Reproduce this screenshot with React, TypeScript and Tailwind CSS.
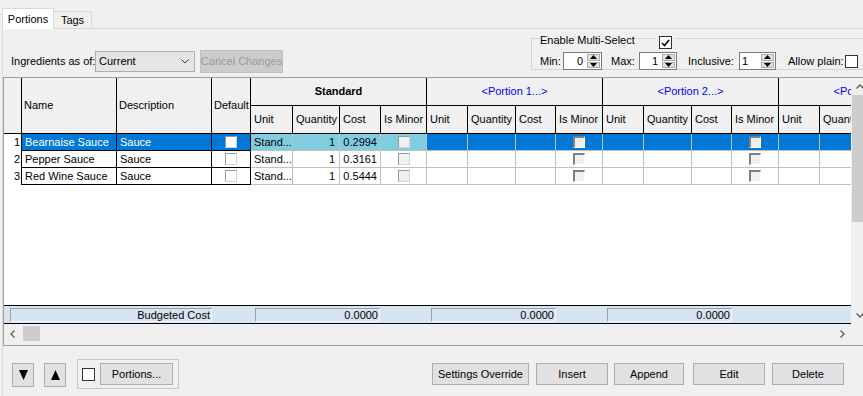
import React from 'react';

const FONT = "font-['Liberation_Sans',Arial,sans-serif]";

type Row = { n: number; name: string; desc: string; unit: string; qty: string; cost: string; selected?: boolean };

const ROWS: Row[] = [
  { n: 1, name: 'Bearnaise Sauce', desc: 'Sauce', unit: 'Stand...', qty: '1', cost: '0.2994', selected: true },
  { n: 2, name: 'Pepper Sauce', desc: 'Sauce', unit: 'Stand...', qty: '1', cost: '0.3161' },
  { n: 3, name: 'Red Wine Sauce', desc: 'Sauce', unit: 'Stand...', qty: '1', cost: '0.5444' },
];

const STD = [
  { label: 'Unit', w: 'w-[42px]' },
  { label: 'Quantity', w: 'w-[47px]' },
  { label: 'Cost', w: 'w-[41px]' },
  { label: 'Is Minor', w: 'w-[46px]' },
];

const POR = [
  { label: 'Unit', w: 'w-[41px]' },
  { label: 'Quantity', w: 'w-[48px]' },
  { label: 'Cost', w: 'w-[40px]' },
  { label: 'Is Minor', w: 'w-[47px]' },
];

const PORTIONS = ['<Portion 1...>', '<Portion 2...>', '<Portion 3...>'];

function Chevron({ dir }: { dir: 'up' | 'down' | 'left' | 'right' }) {
  if (dir === 'up' || dir === 'down') {
    const pts = dir === 'up' ? '0.5,4.5 4,1 7.5,4.5' : '0.5,0.5 4,4 7.5,0.5';
    return (
      <svg width="8" height="5" viewBox="0 0 8 5">
        <polyline points={pts} fill="none" stroke="#606060" strokeWidth="1.4" />
      </svg>
    );
  }
  const pts = dir === 'left' ? '4.5,0.5 1,4 4.5,7.5' : '0.5,0.5 4,4 0.5,7.5';
  return (
    <svg width="5" height="8" viewBox="0 0 5 8">
      <polyline points={pts} fill="none" stroke="#606060" strokeWidth="1.4" />
    </svg>
  );
}

function Tri({ up, w = 7, h = 4 }: { up?: boolean; w?: number; h?: number }) {
  const pts = up ? `0,${h} ${w / 2},0 ${w},${h}` : `0,0 ${w / 2},${h} ${w},0`;
  return (
    <svg width={w} height={h} viewBox={`0 0 ${w} ${h}`}>
      <polygon points={pts} fill="#000" />
    </svg>
  );
}

function Spin({ value, w, left }: { value: string; w: string; left?: boolean }) {
  return (
    <div className={`${w} h-[18px] border border-[#7a7a7a] bg-white flex shrink-0`}>
      <div className={`flex-1 leading-[16px] ${left ? 'text-left pl-[2px]' : 'text-right pr-[3px]'}`}>{value}</div>
      <div className="w-[15px] flex flex-col gap-px p-px">
        <div className="flex-1 bg-[#e1e1e1] border border-[#adadad] flex items-center justify-center">
          <Tri up w={7} h={4} />
        </div>
        <div className="flex-1 bg-[#e1e1e1] border border-[#adadad] flex items-center justify-center">
          <Tri w={7} h={4} />
        </div>
      </div>
    </div>
  );
}

function CheckMark() {
  return (
    <svg width="9" height="8" viewBox="0 0 9 8">
      <polyline points="1,4 3.5,6.5 8,1" fill="none" stroke="#000" strokeWidth="1.6" />
    </svg>
  );
}

function FlatBox({ gray }: { gray?: boolean }) {
  return (
    <div
      className={`w-[12px] h-[12px] border border-t-[#9a9a9a] border-l-[#9a9a9a] border-r-[#d4d4d4] border-b-[#d4d4d4] ${
        gray ? 'bg-[#f0f0f0]' : 'bg-white'
      }`}
    />
  );
}

function SunkBox() {
  return (
    <div className="w-[12px] h-[12px] border-t-2 border-l-2 border-t-[#808080] border-l-[#808080] border-r border-b border-r-white border-b-white bg-[#f0f0f0]" />
  );
}

function GroupHeader({ title, blue, subs }: { title: string; blue?: boolean; subs: typeof STD }) {
  return (
    <div className="flex flex-col w-[176px] shrink-0">
      <div
        className={`h-[28px] border-b border-r border-black flex items-center justify-center whitespace-nowrap overflow-hidden ${
          blue ? 'text-[#0000ff]' : 'font-bold'
        }`}
      >
        {title}
      </div>
      <div className="flex h-[28px] border-b border-black">
        {subs.map((s, i) => (
          <div key={i} className={`${s.w} shrink-0 border-r border-black pl-[3px] flex items-center whitespace-nowrap overflow-hidden`}>
            {s.label}
          </div>
        ))}
      </div>
    </div>
  );
}

function DataRow({ r }: { r: Row }) {
  const sel = r.selected;
  const left = sel ? 'bg-[#0078d7] text-white' : 'bg-white';
  const std = sel ? 'bg-[#80cde1]' : 'bg-white';
  const por = sel ? 'bg-[#0078d7]' : 'bg-white';
  const cell = 'h-[17px] border-r border-b border-[#c0c0c0] shrink-0 leading-[16px] whitespace-nowrap overflow-hidden';
  return (
    <div className="flex h-[17px] shrink-0">
      <div className="w-[18px] shrink-0 bg-white border-r border-black text-right pr-px leading-[16px]">{r.n}</div>
      <div className={`w-[95px] shrink-0 border-r border-b border-black pl-[3px] leading-[16px] ${left}`}>{r.name}</div>
      <div className={`w-[95px] shrink-0 border-r border-b border-black pl-[3px] leading-[16px] ${left}`}>{r.desc}</div>
      <div className={`w-[39px] shrink-0 border-r border-b border-black flex items-center justify-center ${left}`}>
        <FlatBox />
      </div>
      <div className={`${cell} w-[42px] pl-[3px] ${std}`}>{r.unit}</div>
      <div className={`${cell} w-[47px] text-right pr-[4px] ${std}`}>{r.qty}</div>
      <div className={`${cell} w-[41px] text-right pr-[3px] ${std}`}>{r.cost}</div>
      <div className={`${cell} w-[46px] flex items-center justify-center ${std}`}>
        <FlatBox gray />
      </div>
      {PORTIONS.map((p) => (
        <div key={p} className="flex shrink-0">
          <div className={`${cell} w-[41px] ${por}`} />
          <div className={`${cell} w-[48px] ${por}`} />
          <div className={`${cell} w-[40px] ${por}`} />
          <div className={`${cell} w-[47px] flex items-center justify-center ${por}`}>
            <SunkBox />
          </div>
        </div>
      ))}
    </div>
  );
}

function Field({ className, children }: { className: string; children: React.ReactNode }) {
  return (
    <div
      className={`${className} shrink-0 h-[14px] border border-t-[#a0a0a0] border-l-[#a0a0a0] border-r-[#f4f7fb] border-b-[#f4f7fb] text-right pr-px leading-[12px]`}
    >
      {children}
    </div>
  );
}

function Btn({ className, children }: { className: string; children: React.ReactNode }) {
  return (
    <div className={`${className} shrink-0 h-[22px] bg-[#e1e1e1] border border-[#adadad] flex items-center justify-center whitespace-nowrap`}>
      {children}
    </div>
  );
}

export default function App() {
  return (
    <div className={`${FONT} text-[11px] text-black w-[863px] h-[396px] overflow-hidden bg-[#f0f0f0] flex flex-col`}>
      {/* tab strip */}
      <div className="h-[29px] flex items-end pl-[2px] shrink-0">
        <div className="w-[52px] h-[21px] bg-white border border-b-0 border-[#d9d9d9] flex items-center justify-center">Portions</div>
        <div className="w-[38px] h-[18px] border-t border-r border-[#d9d9d9] flex items-center justify-center border-b border-b-[#d9d9d9]">Tags</div>
        <div className="flex-1 border-b border-[#d9d9d9]" />
      </div>

      {/* tab page */}
      <div className="ml-[2px] border-l border-[#d9d9d9] flex-1 flex flex-col w-[900px]">
        {/* toolbar */}
        <div className="h-[48px] flex items-start shrink-0">
          <div className="mt-[21px] h-[23px] flex items-center">
            <div className="ml-[8px] w-[84px] whitespace-nowrap">Ingredients as of:</div>
            <div className="w-[100px] h-[21px] bg-[#e5e5e5] border border-[#acacac] flex items-center pl-[3px] pr-[5px]">
              <span className="flex-1">Current</span>
              <svg width="8" height="5" viewBox="0 0 8 5">
                <polyline points="0.5,0.5 4,4 7.5,0.5" fill="none" stroke="#404040" strokeWidth="1" />
              </svg>
            </div>
            <div className="ml-[5px] w-[83px] h-[23px] bg-[#cccccc] border border-[#bfbfbf] text-[#9a9a9a] flex items-center justify-center whitespace-nowrap">
              Cancel Changes
            </div>
          </div>

          <div className="ml-[248px] mt-[9px] w-[400px] h-[32px] border border-[#d5d5d5] relative shrink-0 flex items-start pt-[13px]">
            <div className="absolute left-[7px] top-[-5px] bg-[#f0f0f0] px-px leading-[13px]">Enable Multi-Select</div>
            <div className="absolute left-[124px] top-[-3px] px-[3px] bg-[#f0f0f0]">
              <div className="w-[13px] h-[13px] bg-white border border-[#333] flex items-center justify-center">
                <CheckMark />
              </div>
            </div>
            <div className="ml-[8px] w-[23px] leading-[18px]">Min:</div>
            <Spin value="0" w="w-[39px]" />
            <div className="ml-[9px] w-[28px] leading-[18px]">Max:</div>
            <Spin value="1" w="w-[38px]" />
            <div className="ml-[11px] w-[51px] leading-[18px]">Inclusive:</div>
            <Spin value="1" w="w-[37px]" left />
            <div className="ml-[12px] w-[57px] leading-[18px] whitespace-nowrap">Allow plain:</div>
            <div className="mt-[3px] w-[13px] h-[13px] bg-white border border-[#333]" />
          </div>
        </div>

        {/* grid */}
        <div className="w-[866px] shrink-0 border border-[#a0a0a0] flex flex-col">
          <div className="flex h-[246px]">
            <div className="w-[847px] flex flex-col overflow-hidden shrink-0 bg-white">
              {/* header */}
              <div className="flex h-[56px] shrink-0 bg-[#f0f0f0]">
                <div className="w-[18px] shrink-0 border-r border-b border-black" />
                <div className="w-[95px] shrink-0 border-r border-b border-black pl-[2px] flex items-center">Name</div>
                <div className="w-[95px] shrink-0 border-r border-b border-black pl-[2px] flex items-center">Description</div>
                <div className="w-[39px] shrink-0 border-r border-b border-black pl-[2px] flex items-center">Default</div>
                <GroupHeader title="Standard" subs={STD} />
                {PORTIONS.map((p) => (
                  <GroupHeader key={p} title={p} blue subs={POR} />
                ))}
              </div>
              {ROWS.map((r) => (
                <DataRow key={r.n} r={r} />
              ))}
              <div className="flex-1 bg-white" />
              <div className="h-[19px] shrink-0 border-y border-black bg-[#d7e4f2] flex items-center">
                <Field className="ml-[6px] w-[202px]">Budgeted Cost</Field>
                <Field className="ml-[43px] w-[125px]">0.0000</Field>
                <Field className="ml-[51px] w-[125px]">0.0000</Field>
                <Field className="ml-[51px] w-[125px]">0.0000</Field>
              </div>
            </div>
            {/* vertical scrollbar */}
            <div className="w-[17px] shrink-0 bg-[#f0f0f0] flex flex-col">
              <div className="h-[17px] flex items-center justify-center">
                <Chevron dir="up" />
              </div>
              <div className="h-[127px] mx-px bg-[#cdcdcd]" />
              <div className="flex-1" />
              <div className="h-[17px] flex items-center justify-center">
                <Chevron dir="down" />
              </div>
            </div>
          </div>
          {/* horizontal scrollbar */}
          <div className="h-[17px] flex shrink-0">
            <div className="w-[17px] flex items-center justify-center pt-[3px]">
              <Chevron dir="left" />
            </div>
            <div className="w-[17px] ml-[2px] mt-[2px] h-[15px] bg-[#cdcdcd]" />
            <div className="flex-1" />
            <div className="w-[17px] flex items-center justify-center pt-[3px] mr-[17px]">
              <Chevron dir="right" />
            </div>
          </div>
          <div className="h-[4px]" />
        </div>

        {/* bottom bar */}
        <div className="flex items-start pt-[13px]">
          <div className="ml-[9px] mt-[4px] w-[22px] h-[24px] bg-[#e1e1e1] border border-[#adadad] flex items-center justify-center">
            <Tri w={9} h={10} />
          </div>
          <div className="ml-[10px] mt-[4px] w-[22px] h-[24px] bg-[#e1e1e1] border border-[#adadad] flex items-center justify-center">
            <Tri up w={9} h={10} />
          </div>
          <div className="ml-[11px] w-[102px] h-[30px] border border-[#c8c8c8] flex items-center">
            <div className="ml-[4px] w-[13px] h-[13px] bg-white border border-[#333]" />
            <Btn className="ml-[5px] w-[73px]">Portions...</Btn>
          </div>
          <Btn className="ml-[253px] mt-[4px] w-[97px]">Settings Override</Btn>
          <Btn className="ml-[7px] mt-[4px] w-[72px]">Insert</Btn>
          <Btn className="ml-[6px] mt-[4px] w-[70px]">Append</Btn>
          <Btn className="ml-[9px] mt-[4px] w-[72px]">Edit</Btn>
          <Btn className="ml-[7px] mt-[4px] w-[72px]">Delete</Btn>
        </div>
      </div>
    </div>
  );
}
